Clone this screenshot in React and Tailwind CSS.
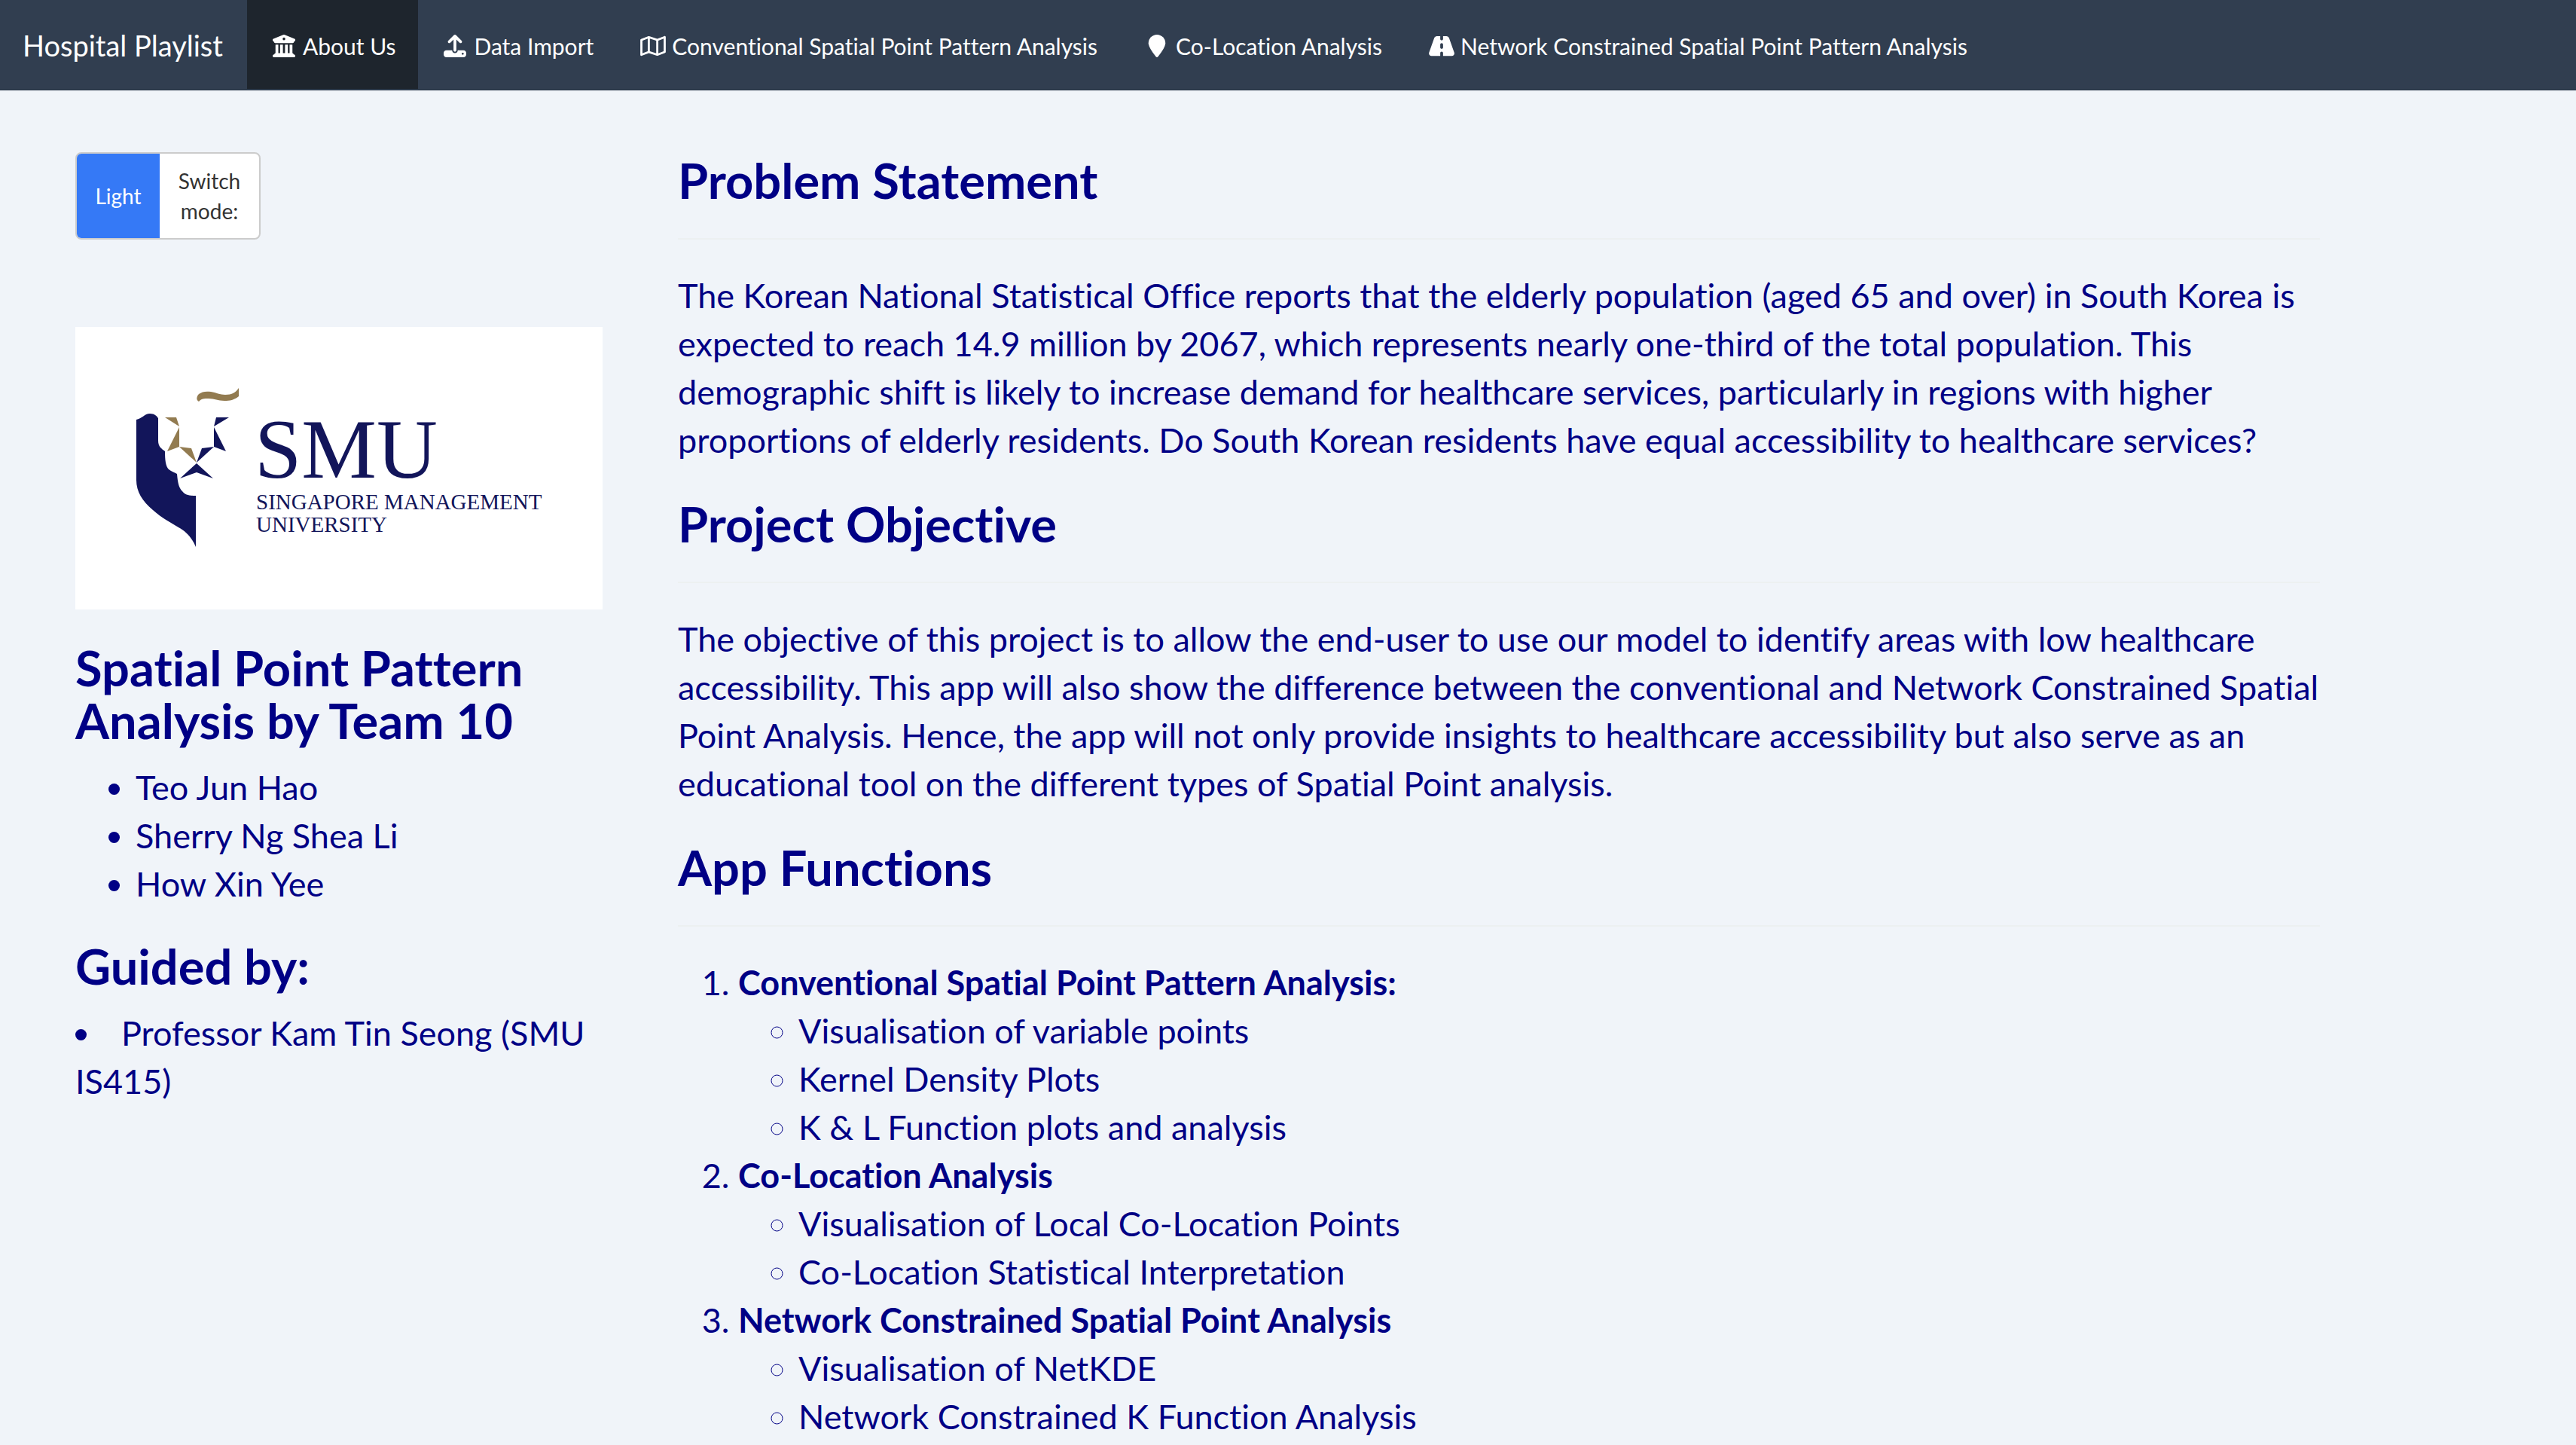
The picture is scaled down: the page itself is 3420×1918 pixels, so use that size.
import { FaRegMap, FaLocationPin, FaRoad, FaUpload } from "react-icons/fa6";

function BankIcon(props) {
  return (
    <svg viewBox="0 0 512 512" fill="currentColor" {...props}>
      <path
        fillRule="evenodd"
        d="M238 4Q256 -4 274 4L496 92Q512 100 512 116V128Q512 144 496 146L476 180Q468 192 452 192H60Q44 192 36 180L16 146Q0 144 0 128V116Q0 100 16 92ZM256 66A30 30 0 1 0 256 126A30 30 0 1 0 256 66Z"
      />
      <path d="M64 224H128V416H168V224H232V416H280V224H344V416H384V224H448V416Q476 424 476 448H486Q512 454 512 480Q512 512 480 512H32Q0 512 0 480Q0 454 26 448H36Q36 424 64 416Z" />
    </svg>
  );
}

const navItems = [
  { label: "About Us", Icon: BankIcon, active: true },
  { label: "Data Import", Icon: FaUpload },
  { label: "Conventional Spatial Point Pattern Analysis", Icon: FaRegMap },
  { label: "Co-Location Analysis", Icon: FaLocationPin },
  { label: "Network Constrained Spatial Point Pattern Analysis", Icon: FaRoad },
];

const functions = [
  {
    title: "Conventional Spatial Point Pattern Analysis:",
    items: ["Visualisation of variable points", "Kernel Density Plots", "K & L Function plots and analysis"],
  },
  {
    title: "Co-Location Analysis",
    items: ["Visualisation of Local Co-Location Points", "Co-Location Statistical Interpretation"],
  },
  {
    title: "Network Constrained Spatial Point Analysis",
    items: ["Visualisation of NetKDE", "Network Constrained K Function Analysis"],
  },
];

function Navbar() {
  return (
    <nav className="flex h-[120px] items-stretch border-b-2 border-[#2c3a4b] bg-[#313e50] text-white">
      <a href="#home" className="flex items-center pt-0.5 pr-8 pl-[30px] text-[38px] leading-[40px]">Hospital Playlist</a>
      {navItems.map(({ label, Icon, active }) => (
        <a
          key={label}
          href="#section"
          aria-current={active ? "page" : undefined}
          className={
            active
              ? "flex items-center gap-1.5 bg-[#1e252d] px-[30px] pt-1 text-[30px] leading-[42px]"
              : "flex items-center gap-1.5 px-[30px] pt-1 text-[30px] leading-[42px]"
          }
        >
          <Icon className="h-[30px] w-[38px]" aria-hidden="true" />
          {label}
        </a>
      ))}
    </nav>
  );
}

function Logo() {
  return (
    <svg viewBox="0 0 700 375" className="block w-full bg-white" role="img" aria-label="Singapore Management University">
      <g fill="#12155a">
        <path d="M81 123C88 122 92 115 99 115C105 115 108 118 110 121V151C110 159 115 162 119 165C119 177 120 185 124 189C128 192 132 193 135 195C136 208 138 214 142 218C146 223 151 224 160 224V292C154 278 146 271 137 266C126 259 115 254 103 243C89 231 81 219 81 203Z" />
        <path d="M187 120H204L184 132Z" />
        <path d="M184 133L200 165L184 159Z" />
        <path d="M184 159L168 161L161 180Z" />
        <path d="M161 181L183 201L161 193L139 201Z" />
      </g>
      <g fill="#927b50">
        <path d="M119 120H134L138 132Z" />
        <path d="M138 133V159L122 165Z" />
        <path d="M138 159L154 161L161 180Z" />
        <path d="M164 99C160 97 161 92 164 89C168 86 173 85 180 86C187 87 192 90 199 90C208 90 213 87 217 81V92C211 97 205 98 198 98C189 98 185 95 177 95C171 95 167 95 164 99Z" />
      </g>
      <g fill="#12155a" fontFamily="'Liberation Serif', serif">
        <text x="238" y="200" fontSize="112">SMU</text>
        <text x="240" y="242" fontSize="29">SINGAPORE MANAGEMENT</text>
        <text x="240" y="272" fontSize="29">UNIVERSITY</text>
      </g>
    </svg>
  );
}

function Section({ title, children }) {
  return (
    <section className="mb-11">
      <h2 className="text-[65px] leading-[70px] font-bold">{title}</h2>
      <hr className="my-[42px] border-t-2 border-[#ecf0f1]" />
      {children}
    </section>
  );
}

export default function App() {
  return (
    <div className="h-screen overflow-hidden bg-[#f0f4f9] font-['Lato',sans-serif] text-[45px] leading-[64px] text-[#000085] [font-variant-ligatures:none]">
      <Navbar />
      <div className="flex gap-[100px] pt-[84px] pr-[340px] pl-[100px]">
        <aside className="w-[700px] shrink-0">
          <button
            type="button"
            className="-mt-0.5 flex h-[116px] w-[246px] items-stretch overflow-hidden rounded-lg border-2 border-[#cccccc] bg-white text-[28px] leading-[40px]"
          >
            <span className="flex w-[110px] items-center justify-center bg-[#3579f6] text-white">Light</span>
            <span className="flex flex-1 items-center justify-center px-5 text-center text-[#333333]">Switch mode:</span>
          </button>
          <div className="mt-[116px]">
            <Logo />
          </div>
          <h2 className="mt-[42px] text-[65px] leading-[70px] font-bold">Spatial Point Pattern Analysis by Team 10</h2>
          <ul className="mt-[22px] list-disc pl-20">
            <li>Teo Jun Hao</li>
            <li>Sherry Ng Shea Li</li>
            <li>How Xin Yee</li>
          </ul>
          <h2 className="mt-[42px] text-[65px] leading-[70px] font-bold">Guided by:</h2>
          <ul className="mt-[22px] list-inside list-disc">
            <li>Professor Kam Tin Seong (SMU IS415)</li>
          </ul>
        </aside>
        <main className="min-w-0 flex-1">
          <Section title="Problem Statement">
            <p>
              The Korean National Statistical Office reports that the elderly population (aged 65 and over) in South Korea is expected to reach 14.9 million by 2067, which represents nearly one-third of the total population. This demographic shift is likely to increase demand for healthcare services, particularly in regions with higher proportions of elderly residents. Do South Korean residents have equal accessibility to healthcare services?
            </p>
          </Section>
          <Section title="Project Objective">
            <p>
              The objective of this project is to allow the end-user to use our model to identify areas with low healthcare accessibility. This app will also show the difference between the conventional and Network Constrained Spatial Point Analysis. Hence, the app will not only provide insights to healthcare accessibility but also serve as an educational tool on the different types of Spatial Point analysis.
            </p>
          </Section>
          <Section title="App Functions">
            <ol className="list-decimal pl-20">
              {functions.map((f) => (
                <li key={f.title}>
                  <strong className="font-bold">{f.title}</strong>
                  <ul className="list-[circle] pl-20">
                    {f.items.map((item) => (
                      <li key={item}>{item}</li>
                    ))}
                  </ul>
                </li>
              ))}
            </ol>
          </Section>
        </main>
      </div>
    </div>
  );
}
